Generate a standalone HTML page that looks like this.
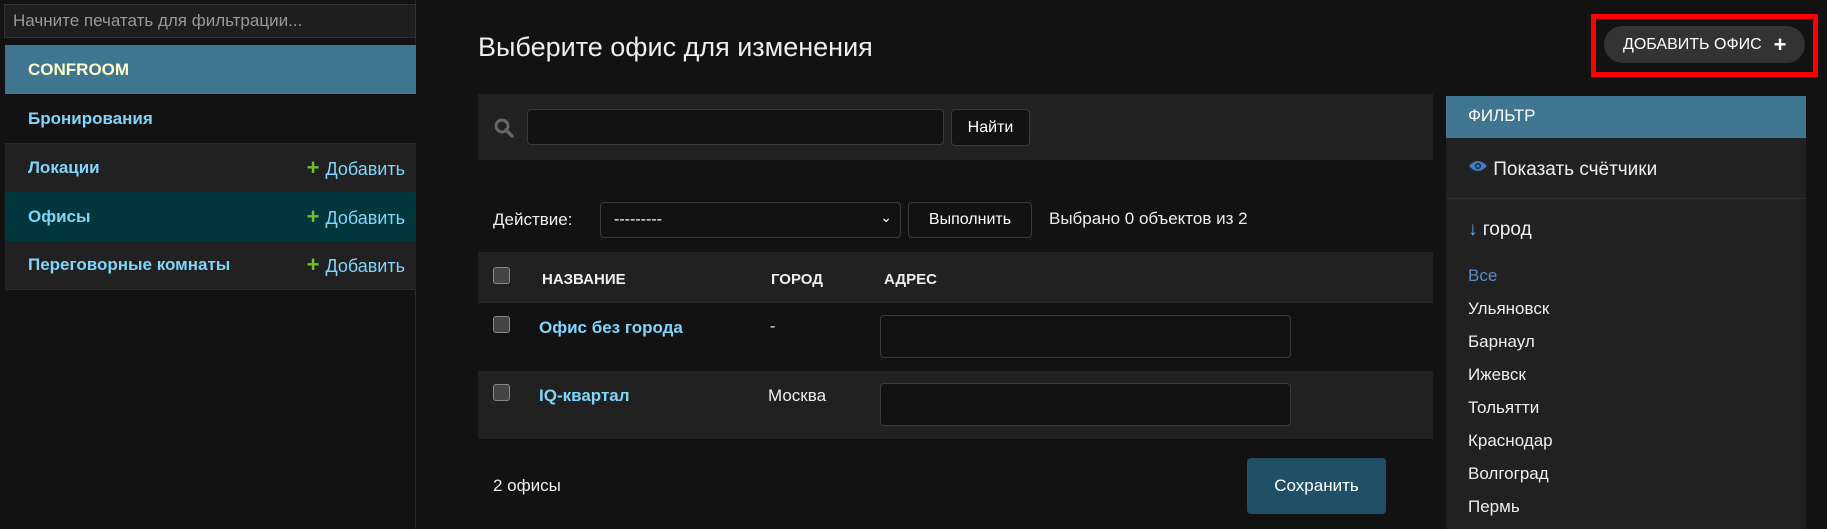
<!DOCTYPE html>
<html><head><meta charset="utf-8"><style>
*{box-sizing:border-box;margin:0;padding:0}
body{width:1827px;height:529px;background:#121212;font-family:"Liberation Sans",sans-serif;color:#eee;position:relative;overflow:hidden;font-size:16px}
.a{position:absolute}
.row{position:absolute;left:5px;width:411px;height:49px;display:flex;align-items:center;padding-left:23px;font-weight:bold;color:#81d4fa;font-size:17px}
.add{position:absolute;right:11px;font-weight:normal;color:#81d4fa;font-size:18px}
.add b{color:#70bf2b;font-size:22px;margin-right:6px}
.lnk{color:#81d4fa;font-weight:bold;font-size:17px}
.cb{position:absolute;width:17px;height:17px;border:1.5px solid #888;border-radius:3px;background:#444}
.inp{position:absolute;background:#121212;border:1px solid #3a3a3a;border-radius:4px}
.btn{position:absolute;background:#121212;border:1px solid #3a3a3a;border-radius:4px;color:#fff;display:flex;align-items:center;justify-content:center;font-size:16px}
.city{position:absolute;left:1468px;font-size:17px;color:#eee}
</style></head><body>
<div class="a" style="left:5px;top:0;width:411px;height:529px;border-right:1px solid #2a2a2a"></div>
<div class="inp" style="left:4px;top:4px;width:412px;height:34px;background:#1e1e1e;border-color:#333;border-radius:0;color:#999;font-size:17px;padding:6px 8px">Начните печатать для фильтрации...</div>
<div class="row" style="top:45px;background:#417690;color:#ffffcc;font-size:17px">CONFROOM</div>
<div class="row" style="top:94px;background:#121212">Бронирования</div>
<div class="row" style="top:143px;background:#212121;border-top:1px solid #2a2a2a">Локации<span class="add"><b>+</b>Добавить</span></div>
<div class="row" style="top:192px;background:#00363c">Офисы<span class="add"><b>+</b>Добавить</span></div>
<div class="row" style="top:241px;background:#212121;border-bottom:1px solid #2a2a2a">Переговорные комнаты<span class="add"><b>+</b>Добавить</span></div>

<div class="a" style="left:478px;top:32px;font-size:27px;color:#eee">Выберите офис для изменения</div>

<div class="a" style="left:1591px;top:14px;width:227px;height:63px;border:5px solid #f00"></div>
<div class="a" style="left:1604px;top:26px;width:201px;height:37px;background:#333;border-radius:19px;color:#fff;font-size:16px;display:flex;align-items:center;padding-left:19px">ДОБАВИТЬ ОФИС <span style="margin-left:12px;font-weight:bold;font-size:22px">+</span></div>

<div class="a" style="left:478px;top:94px;width:955px;height:66px;background:#212121"></div>
<svg class="a" style="left:493px;top:117px" width="22" height="22" viewBox="0 0 22 22"><circle cx="9" cy="9" r="6" fill="none" stroke="#666" stroke-width="3"/><path d="M13 13l6 6" stroke="#666" stroke-width="3.5" stroke-linecap="round"/></svg>
<div class="inp" style="left:527px;top:109px;width:417px;height:36px"></div>
<div class="btn" style="left:951px;top:109px;width:79px;height:37px">Найти</div>

<div class="a" style="left:493px;top:210px;font-size:17px">Действие:</div>
<div class="inp" style="left:600px;top:202px;width:301px;height:36px;padding:8px 13px;color:#fff;font-size:16px">---------<span style="position:absolute;right:8px;top:6px;font-size:14px">&#8964;</span></div>
<div class="btn" style="left:908px;top:202px;width:124px;height:36px">Выполнить</div>
<div class="a" style="left:1049px;top:209px;font-size:17px">Выбрано 0 объектов из 2</div>

<div class="a" style="left:478px;top:252px;width:955px;height:51px;background:#212121;border-bottom:1px solid #2a2a2a"></div>
<div class="cb" style="left:493px;top:267px"></div>
<div class="a" style="left:542px;top:271px;font-size:15px;font-weight:bold">НАЗВАНИЕ</div>
<div class="a" style="left:771px;top:271px;font-size:15px;font-weight:bold">ГОРОД</div>
<div class="a" style="left:884px;top:271px;font-size:15px;font-weight:bold">АДРЕС</div>

<div class="cb" style="left:493px;top:316px"></div>
<div class="a lnk" style="left:539px;top:318px">Офис без города</div>
<div class="a" style="left:770px;top:318px">-</div>
<div class="inp" style="left:880px;top:315px;width:411px;height:43px"></div>

<div class="a" style="left:478px;top:371px;width:955px;height:68px;background:#212121"></div>
<div class="cb" style="left:493px;top:384px"></div>
<div class="a lnk" style="left:539px;top:386px">IQ-квартал</div>
<div class="a" style="left:768px;top:386px;font-size:17px">Москва</div>
<div class="inp" style="left:880px;top:383px;width:411px;height:43px"></div>

<div class="a" style="left:493px;top:476px;font-size:17px">2 офисы</div>
<div class="a" style="left:1247px;top:458px;width:139px;height:56px;background:#205067;border-radius:4px;display:flex;align-items:center;justify-content:center;font-size:17px;color:#fff">Сохранить</div>

<div class="a" style="left:1446px;top:96px;width:360px;height:433px;background:#212121"></div>
<div class="a" style="left:1446px;top:96px;width:360px;height:42px;background:#417690;padding:10px 22px;font-size:17px;color:#fff">ФИЛЬТР</div>
<div class="a" style="left:1446px;top:198px;width:360px;height:1px;background:#2e2e2e"></div>
<div class="a" style="left:1468px;top:159px;font-size:19px;color:#eee"><svg width="20" height="14" viewBox="0 0 20 14" style="vertical-align:2px"><path d="M1 7Q10-3 19 7Q10 17 1 7Z" fill="#3e7dc4"/><circle cx="10" cy="7" r="3" fill="#212121"/><circle cx="10" cy="7" r="1.6" fill="#3e7dc4"/></svg> Показать счётчики</div>
<div class="a" style="left:1468px;top:219px;font-size:19px;color:#eee"><span style="color:#4fb3e8">&#8595;</span> город</div>
<div class="city" style="top:266px;color:#5b8bd0">Все</div>
<div class="city" style="top:299px">Ульяновск</div>
<div class="city" style="top:332px">Барнаул</div>
<div class="city" style="top:365px">Ижевск</div>
<div class="city" style="top:398px">Тольятти</div>
<div class="city" style="top:431px">Краснодар</div>
<div class="city" style="top:464px">Волгоград</div>
<div class="city" style="top:497px">Пермь</div>
</body></html>
